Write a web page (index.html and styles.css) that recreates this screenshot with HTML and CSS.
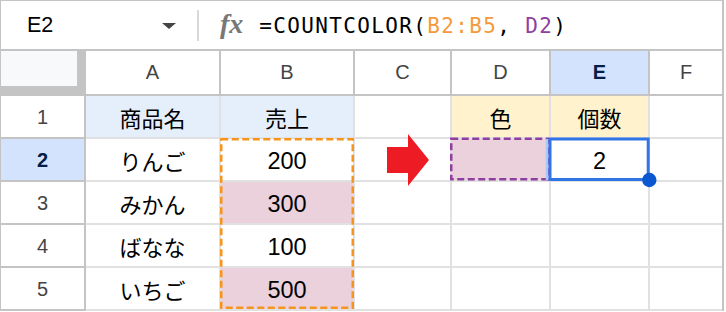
FILE: index.html
```html
<!DOCTYPE html>
<html lang="ja">
<head>
    <meta charset="UTF-8">
    <meta name="viewport" content="width=device-width, initial-scale=1.0">
    <title>COUNTCOLOR</title>
    <link rel="stylesheet" href="styles.css">
</head>
<body>
    <div class="sheet">
        <div class="formula-bar">
            <div class="name-box">
                <span class="cell-ref">E2</span>
                <span class="caret"></span>
            </div>
            <div class="divider"></div>
            <span class="fx">fx</span>
            <div class="formula">=COUNTCOLOR(<span class="ref-orange">B2:B5</span>, <span class="ref-purple">D2</span>)</div>
        </div>

        <div class="grid">
            <div class="corner"><div class="corner-inner"></div></div>
            <div class="head">A</div>
            <div class="head">B</div>
            <div class="head">C</div>
            <div class="head">D</div>
            <div class="head head-active">E</div>
            <div class="head last">F</div>

            <div class="row-head">1</div>
            <div class="cell jp blue">商品名</div>
            <div class="cell jp blue">売上</div>
            <div class="cell"></div>
            <div class="cell jp yellow">色</div>
            <div class="cell jp yellow">個数</div>
            <div class="cell last"></div>

            <div class="row-head row-active">2</div>
            <div class="cell jp">りんご</div>
            <div class="cell">200</div>
            <div class="cell"></div>
            <div class="cell pink"></div>
            <div class="cell">2</div>
            <div class="cell last"></div>

            <div class="row-head">3</div>
            <div class="cell jp">みかん</div>
            <div class="cell pink">300</div>
            <div class="cell"></div>
            <div class="cell"></div>
            <div class="cell"></div>
            <div class="cell last"></div>

            <div class="row-head">4</div>
            <div class="cell jp">ばなな</div>
            <div class="cell">100</div>
            <div class="cell"></div>
            <div class="cell"></div>
            <div class="cell"></div>
            <div class="cell last"></div>

            <div class="row-head">5</div>
            <div class="cell jp">いちご</div>
            <div class="cell pink">500</div>
            <div class="cell"></div>
            <div class="cell"></div>
            <div class="cell"></div>
            <div class="cell last"></div>
        </div>

        <!-- selection outlines and the arrow, drawn over the grid -->
        <svg class="overlay" width="726" height="312" viewBox="0 0 726 312">
            <polygon points="387,147 408,147 408,134 429,160 408,186 408,173 387,173" fill="#ed1c24"/>
            <rect x="221.25" y="139.25" width="131.5" height="168.5" fill="none" stroke="#f7941d" stroke-width="2.5" stroke-dasharray="7 3.5"/>
            <rect x="451.25" y="138.75" width="96.5" height="40.5" fill="none" stroke="#8e3fa0" stroke-width="2.5" stroke-dasharray="7 3.5"/>
            <line x1="547" y1="139" x2="547" y2="180" stroke="#a8c7fa" stroke-width="2.5"/>
            <rect x="550" y="139" width="98.2" height="40.5" fill="none" stroke="#2f75e6" stroke-width="3"/>
            <circle cx="649.3" cy="180" r="7.2" fill="#0b57d0"/>
        </svg>
    </div>
</body>
</html>
```

FILE: styles.css
```css
body {
    margin: 0;
    background: #fff;
    font-family: "Liberation Sans", Arial, sans-serif;
}
.sheet {
    position: relative;
    width: 721px;
    border-top: 1px solid #c4c4c4;
    border-left: 1px solid #c4c4c4;
    border-right: 2px solid #c4c4c4;
}
.formula-bar {
    display: flex;
    align-items: center;
    height: 48px;
    border-bottom: 2px solid #c4c4c4;
}
.name-box {
    display: flex;
    align-items: center;
    justify-content: space-between;
    box-sizing: border-box;
    width: 196px;
    padding-left: 26px;
    padding-right: 21px;
}
.cell-ref {
    font-size: 21.5px;
    color: #000;
}
.caret {
    width: 0;
    height: 0;
    border-left: 7.5px solid transparent;
    border-right: 7.5px solid transparent;
    border-top: 6.5px solid #444;
    margin-top: 1px;
}
.divider {
    width: 2px;
    height: 31px;
    background: #d9d9d9;
}
.fx {
    margin-left: 21px;
    font-family: "Liberation Serif", serif;
    font-style: italic;
    font-weight: bold;
    font-size: 28px;
    color: #777;
    margin-top: -2px;
}
.formula {
    margin-left: 16px;
    font-family: "DejaVu Sans Mono", monospace;
    font-size: 21px;
    letter-spacing: 1.35px;
    color: #000;
    margin-top: 1px;
}
.ref-orange {
    color: #f59a3c;
}
.ref-purple {
    color: #8e3fa0;
}
.grid {
    display: grid;
    grid-template-columns: 85px 135px 134px 97px 99px 99px 72px;
    grid-template-rows: 45px repeat(5, 43px);
}
.grid > div {
    box-sizing: border-box;
    display: flex;
    align-items: center;
    justify-content: center;
}
.corner {
    background: #c4c4c4;
    align-items: flex-start !important;
    justify-content: flex-start !important;
}
.corner-inner {
    width: 76px;
    height: 35px;
    background: #f8f9fa;
}
.head {
    border-right: 2px solid #c4c4c4;
    border-bottom: 2px solid #c4c4c4;
    font-size: 20px;
    color: #444;
}
.head-active {
    background: #d3e3fd;
    color: #041e49;
    font-weight: bold;
}
.row-head {
    border-right: 2px solid #c4c4c4;
    border-bottom: 2px solid #c4c4c4;
    font-size: 20px;
    color: #444;
    padding-top: 1px;
}
.row-active {
    background: #d3e3fd;
    color: #041e49;
    font-weight: bold;
}
.cell {
    border-right: 2px solid #e1e1e1;
    border-bottom: 2px solid #e1e1e1;
    font-size: 23.5px;
    color: #000;
    padding-top: 3px;
}
.head.last,
.cell.last {
    border-right: none;
}
.jp {
    font-family: "Noto Sans CJK JP", sans-serif;
    font-size: 22px;
    padding-top: 0;
}
.blue {
    background: #e5effb;
}
.yellow {
    background: #fff2cc;
}
.pink {
    background: #ead1dc;
}
.overlay {
    position: absolute;
    top: -1px;
    left: -1px;
    pointer-events: none;
}
```
